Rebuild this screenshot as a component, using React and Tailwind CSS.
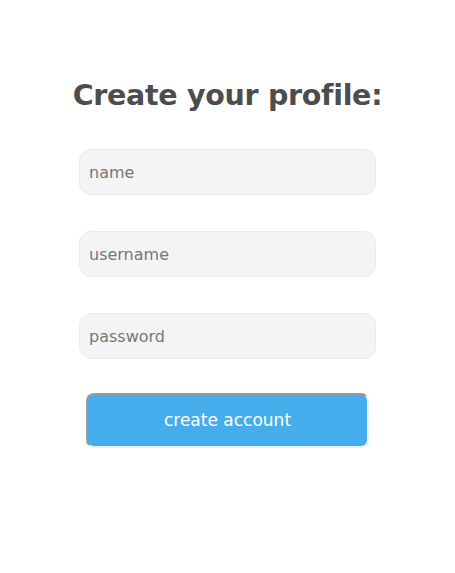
import React from 'react';

const inputClass =
  'w-[297px] h-[46px] px-[9px] rounded-xl border border-[#ebebeb] bg-[#f4f4f4] text-[16px] text-[#555] placeholder:text-[#777] outline-none';

const App = () => {
  return (
    <div
      className="min-h-[573px] w-full bg-white flex flex-col items-center pt-[76px]"
      style={{ fontFamily: '"DejaVu Sans", "Open Sans", sans-serif' }}
    >
      <h1 className="text-[28.5px] font-bold leading-[39px] text-[#4d4d4f] tracking-[-0.3px]">
        Create your profile:
      </h1>

      <form className="flex flex-col items-center mt-[34px]">
        <input type="text" placeholder="name" className={inputClass} />
        <input type="text" placeholder="username" className={`${inputClass} mt-[36px]`} />
        <input type="password" placeholder="password" className={`${inputClass} mt-[36px]`} />

        <button
          type="button"
          className="mt-[34px] w-[283px] h-[55px] rounded-lg bg-[#45adec] text-white text-[17px] border-2 border-t-[#9a9a9a] border-l-[#9a9a9a] border-r-[#e4f2fb] border-b-[#e4f2fb]"
        >
          create account
        </button>
      </form>
    </div>
  );
};

export default App;
